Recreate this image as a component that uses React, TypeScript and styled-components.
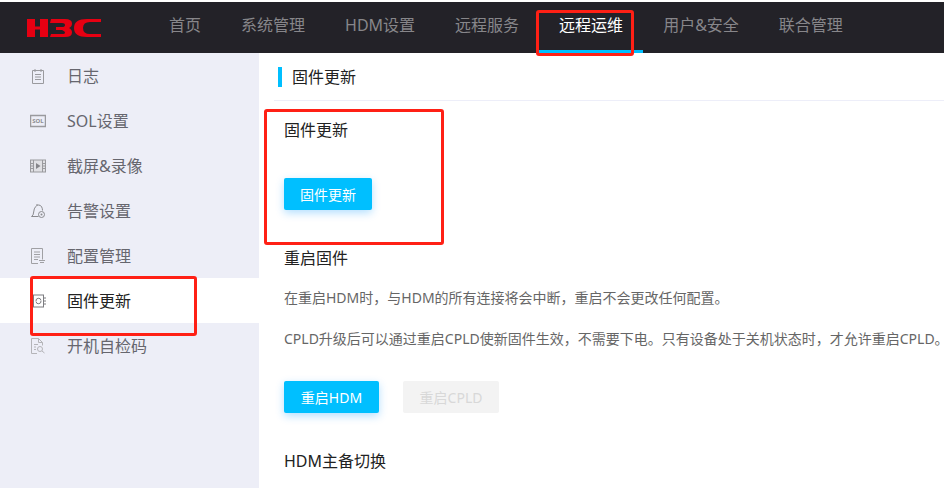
import styled, { createGlobalStyle } from 'styled-components'

const GlobalStyle = createGlobalStyle`
  html, body {
    margin: 0;
    padding: 0;
    background: #fff;
  }
  body {
    font-family: "Noto Sans", "Noto Sans CJK SC", sans-serif;
  }
`

const Page = styled.div`
  position: relative;
  width: 944px;
  height: 488px;
  overflow: hidden;
  display: flex;
  flex-direction: column;
`

const Header = styled.header`
  height: 51px;
  margin-top: 2px;
  background: #232228;
  display: flex;
  align-items: stretch;
  flex-shrink: 0;
`

const LogoBox = styled.div`
  width: 149px;
  padding-left: 27px;
  box-sizing: border-box;
  display: flex;
  align-items: center;
`

const NavItem = styled.div<{ $active?: boolean }>`
  padding: 0 20px;
  font-size: 16px;
  line-height: 47px;
  color: ${({ $active }) => ($active ? '#fff' : '#87868a')};
  border-bottom: 3px solid ${({ $active }) => ($active ? '#00bfff' : 'transparent')};
`

const Body = styled.div`
  flex: 1;
  display: flex;
  min-height: 0;
`

const Sidebar = styled.aside`
  width: 259px;
  flex-shrink: 0;
  background: #edeef7;
`

const SideItem = styled.div<{ $active?: boolean }>`
  height: 45px;
  display: flex;
  align-items: center;
  padding-left: 30px;
  font-size: 16px;
  line-height: 22px;
  color: ${({ $active }) => ($active ? '#222' : '#66666e')};
  background: ${({ $active }) => ($active ? '#fff' : 'transparent')};
`

const SideIcon = styled.svg`
  width: 16px;
  height: 16px;
  margin-right: 21px;
  fill: none;
  stroke: #9a9a9e;
  stroke-width: 1;
`

const SolLabel = styled.text`
  font-size: 6px;
  font-weight: 700;
  fill: #8f8f93;
  stroke: none;
`

const Main = styled.main`
  flex: 1;
  min-width: 0;
`

const TitleBar = styled.div`
  height: 47px;
  margin-left: 15px;
  padding-left: 4px;
  border-bottom: 1px solid #edeef9;
  display: flex;
  align-items: center;
  gap: 10px;
  font-size: 16px;
  line-height: 22px;
  color: #222;
`

const TitleMark = styled.span`
  width: 4px;
  height: 20px;
  background: #00bfff;
`

const Content = styled.div`
  padding: 18px 0 0 25px;
  white-space: nowrap;
`

const Heading = styled.h2`
  margin: 0;
  font-size: 16px;
  font-weight: 400;
  line-height: 22px;
  color: #222;
`

const Note = styled.p`
  margin: 0;
  font-size: 14px;
  line-height: 20px;
  color: #666;
`

const ButtonRow = styled.div`
  display: flex;
  gap: 24px;
`

const ActionButton = styled.button<{ $disabled?: boolean }>`
  height: 32px;
  padding: 0;
  border: 0;
  border-radius: 2px;
  font: inherit;
  font-size: 14px;
  color: ${({ $disabled }) => ($disabled ? '#d8d8d8' : '#fff')};
  background: ${({ $disabled }) => ($disabled ? '#f3f3f3' : '#00bfff')};
  box-shadow: ${({ $disabled }) => ($disabled ? 'none' : '0 3px 8px rgba(0, 150, 255, 0.3)')};
  width: ${({ $disabled }) => ($disabled ? '96px' : '95px')};
  &.update {
    width: 88px;
  }
`

const Section = styled.section`
  margin-bottom: 37px;
`

const Spaced = styled.div<{ $top: number }>`
  margin-top: ${({ $top }) => $top}px;
`

const Annotation = styled.div`
  position: absolute;
  border: 3px solid #ff2015;
  border-radius: 3px;
  box-sizing: border-box;
`

const AnnotationNav = styled(Annotation)`
  left: 536px;
  top: 10px;
  width: 98px;
  height: 46px;
`

const AnnotationForm = styled(Annotation)`
  left: 264px;
  top: 109px;
  width: 180px;
  height: 136px;
`

const AnnotationSide = styled(Annotation)`
  left: 30px;
  top: 276px;
  width: 167px;
  height: 60px;
`

const navItems = ['首页', '系统管理', 'HDM设置', '远程服务', '远程运维', '用户&安全', '联合管理']

const Logo = () => (
  <svg width="75" height="18" viewBox="0 0 75 18">
    <path fill="#e60012" d="M0 0h8v7.500h5V0h8v18h-8v-7.500H8V18H0z" />
    <path
      fill="#e60012"
      d="M24 0h14q7 0 7 4.500q0 3-3 4.500q3 1.500 3 4.500q0 4.500-7 4.500H23l1-3h11q3 0 3-1.500t-3-2.500H29v-3h6q3 0 3-2t-3-2H23z"
    />
    <path fill="#e60012" d="M74 0H60Q47 0 47 9t13 9h14v-3H63q-7 0-7-6t7-6h11z" />
  </svg>
)

const icons = [
  <>
    <path d="M2.500 2.500h11v13h-11zM5 1v3M11 1v3M5 6.500h6M5 9h6M5 11.500h6" />
  </>,
  <>
    <rect x="0.500" y="2.500" width="15" height="11" strokeWidth="1.500" />
    <SolLabel x="8" y="10.200" textAnchor="middle">SOL</SolLabel>
  </>,
  <>
    <rect x="0.500" y="2" width="15" height="12" fill="#e0e0e4" />
    <path d="M3.500 2v12M12.500 2v12M0.500 5.500h3M0.500 8h3M0.500 10.500h3M12.500 5.500h3M12.500 8h3M12.500 10.500h3" />
    <path d="M6 5l4.500 3-4.500 3z" fill="#85858a" stroke="none" />
  </>,
  <>
    <path d="M1.500 13.500q2-1 2.200-4.500t2-5.500q1-1.500 3-1.500t3 2q.8 1.500.8 3.500M1.500 13.500h7M7 1v1" stroke="#8a8a8e" />
    <circle cx="11.500" cy="11.500" r="3" stroke="#8a8a8e" />
    <circle cx="11.500" cy="11.500" r="1" fill="#8a8a8e" stroke="none" />
  </>,
  <>
    <path d="M8 15.500H1.500V.500h11v11M4 4h6M4 6.500h6M4 9h6M4 11.500h4M9 12.500h6M10 14.500h4" stroke="#a0a0a4" />
  </>,
  <>
    <rect x="3.500" y="2" width="10" height="12" stroke="#7c7c80" />
    <path d="M13.500 5h3M13.500 8h3M13.500 11h3M6 8a2.500 2.500 0 0 1 5-.5M11 8a2.500 2.500 0 0 1-5 .5" stroke="#7c7c80" />
  </>,
  <>
    <path d="M7 15.500H1.500V.500h7l4 4v3M8.500.500v4h4M4 6.500h4M4 9h2M4 11.500h2" stroke="#b4b4b8" />
    <circle cx="10" cy="11" r="2.500" stroke="#b4b4b8" />
    <path d="M12 13l2.500 2" stroke="#b4b4b8" />
  </>,
]

const sideItems = ['日志', 'SOL设置', '截屏&录像', '告警设置', '配置管理', '固件更新', '开机自检码']

export default function App() {
  return (
    <Page>
      <GlobalStyle />
      <Header>
        <LogoBox>
          <Logo />
        </LogoBox>
        {navItems.map((name) => (
          <NavItem key={name} $active={name === '远程运维'}>
            {name}
          </NavItem>
        ))}
      </Header>
      <Body>
        <Sidebar>
          {sideItems.map((name, i) => (
            <SideItem key={name} $active={name === '固件更新'}>
              <SideIcon viewBox="0 0 16 16">{icons[i]}</SideIcon>
              {name}
            </SideItem>
          ))}
        </Sidebar>
        <Main>
          <TitleBar>
            <TitleMark />
            固件更新
          </TitleBar>
          <Content>
            <Section>
              <Heading>固件更新</Heading>
              <Spaced $top={37}>
                <ActionButton className="update">固件更新</ActionButton>
              </Spaced>
            </Section>
            <Section>
              <Heading>重启固件</Heading>
              <Spaced $top={19}>
                <Note>在重启HDM时，与HDM的所有连接将会中断，重启不会更改任何配置。</Note>
              </Spaced>
              <Spaced $top={21}>
                <Note>CPLD升级后可以通过重启CPLD使新固件生效，不需要下电。只有设备处于关机状态时，才允许重启CPLD。</Note>
              </Spaced>
              <Spaced $top={32}>
                <ButtonRow>
                  <ActionButton>重启HDM</ActionButton>
                  <ActionButton $disabled>重启CPLD</ActionButton>
                </ButtonRow>
              </Spaced>
            </Section>
            <Heading>HDM主备切换</Heading>
          </Content>
        </Main>
      </Body>
      <AnnotationNav />
      <AnnotationForm />
      <AnnotationSide />
    </Page>
  )
}
